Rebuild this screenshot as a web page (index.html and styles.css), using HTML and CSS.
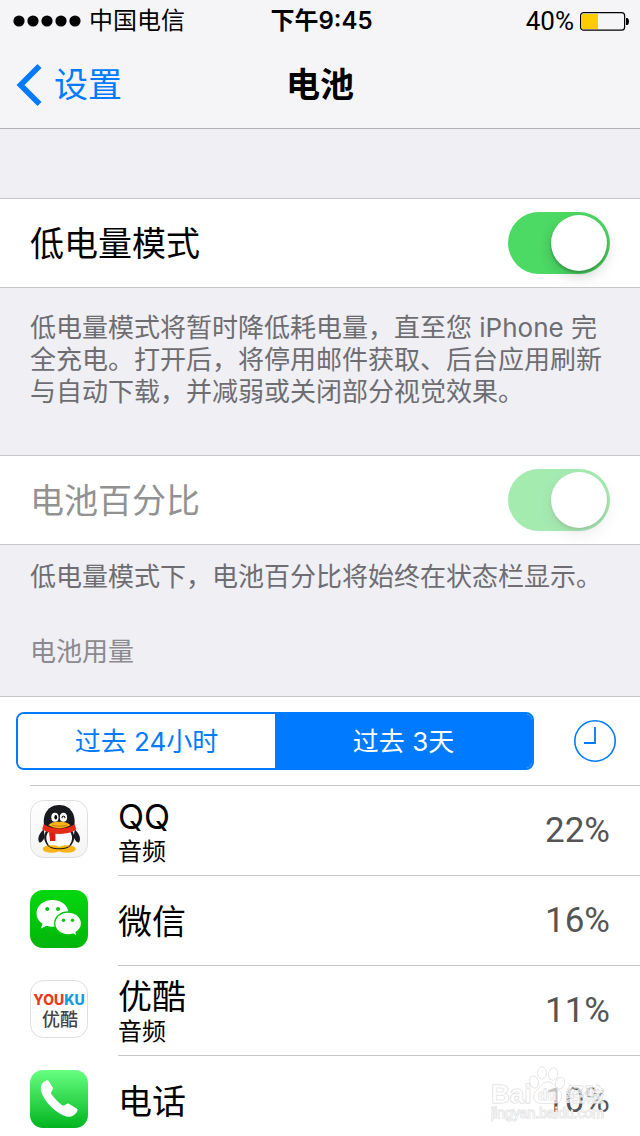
FILE: index.html
```html
<!DOCTYPE html>
<html lang="zh-CN">
<head>
<meta charset="utf-8">
<meta name="viewport" content="width=device-width">
<title>电池</title>
<link rel="stylesheet" href="styles.css">
</head>
<body>
<header class="top">
  <div class="status">
    <div class="carrier">
      <svg class="signal" width="68" height="12" viewBox="0 0 68 12" aria-hidden="true"><circle cx="6" cy="6" r="5.6"/><circle cx="20" cy="6" r="5.6"/><circle cx="34" cy="6" r="5.6"/><circle cx="48" cy="6" r="5.6"/><circle cx="62" cy="6" r="5.6"/></svg>
      <span>中国电信</span>
    </div>
    <div class="time">下午9:45</div>
    <div class="charge">
      <span class="level">40%</span>
      <svg width="50" height="20" viewBox="0 0 50 20" aria-hidden="true"><rect x=".6" y="1.6" width="44" height="17.6" rx="3" fill="none" stroke="#000" stroke-width="1.2"/><rect x="2" y="3" width="16" height="15" fill="#fc0"/><path d="M46 7h1.5q1.500 1 1.500 3.500t-1.500 3.500H46z"/></svg>
    </div>
  </div>
  <nav class="nav">
    <a class="back" href="#settings">
      <svg width="26" height="42" viewBox="0 0 26 42" aria-hidden="true"><path d="M23.500 2 4.500 21l19 19" fill="none" stroke="#007aff" stroke-width="5.600"/></svg>
      <span>设置</span>
    </a>
    <h1 class="title">电池</h1>
  </nav>
</header>
<main>
  <section class="group first">
    <div class="cell">
      <label for="low-power">低电量模式</label>
      <input class="switch" type="checkbox" id="low-power" checked>
    </div>
    <p class="note tall">低电量模式将暂时降低耗电量，直至您 iPhone 完全充电。打开后，将停用邮件获取、后台应用刷新与自动下载，并减弱或关闭部分视觉效果。</p>
  </section>
  <section class="group">
    <div class="cell off">
      <label for="percent">电池百分比</label>
      <input class="switch" type="checkbox" id="percent" checked disabled>
    </div>
    <p class="note">低电量模式下，电池百分比将始终在状态栏显示。</p>
  </section>
  <section class="usage">
    <h2 class="heading">电池用量</h2>
    <div class="panel">
      <div class="range">
        <div class="segments">
          <button class="segment" type="button">过去 24小时</button>
          <button class="segment active" type="button">过去 3天</button>
        </div>
        <button class="clock" type="button" aria-label="显示时间">
          <svg width="42" height="42" viewBox="0 0 42 42" fill="none" stroke="#007aff" aria-hidden="true"><circle cx="21" cy="21" r="20.200" stroke-width="1.600"/><path d="M21 7v16H10" stroke-width="1.800"/></svg>
        </button>
      </div>
      <ul class="apps">
        <li class="app">
          <svg class="icon" viewBox="0 0 58 58" aria-hidden="true">
            <defs><linearGradient id="paper" x2="0" y2="1"><stop stop-color="#fff"/><stop offset="1" stop-color="#f4f4f5"/></linearGradient></defs>
            <rect x=".5" y=".5" width="57" height="57" rx="13" fill="url(#paper)" stroke="#dedede"/>
            <g transform="translate(-1.300 0) scale(1.070 1.010)">
            <path d="M14 29C9 34 8 39 10 42c2 1 4-3 5-5zM43 29c5 5 6 10 4 13-2 1-4-3-5-5z" fill="#191a1f"/>
            <ellipse cx="28.500" cy="37" rx="14" ry="13" fill="#191a1f"/>
            <ellipse cx="28.500" cy="37.500" rx="12" ry="11.500" fill="#fff"/>
            <ellipse cx="21.500" cy="48.500" rx="8.500" ry="3.700" fill="#fbb315"/><ellipse cx="35.500" cy="48.500" rx="8.500" ry="3.700" fill="#fbb315"/>
            <path d="M17 44c3 6.500 20 6.500 23 0-4 5-19 5-23 0z" fill="#191a1f"/>
            <path d="M15 28c-3-10 1-23 13.500-23S45 18 42 28c-7 7-20 7-27 0z" fill="#191a1f"/>
            <path d="M14 24c8 5.500 22 5.500 29 0l1.500 5c-7 6-24 6-32 0z" fill="#e52b16"/><path d="M19 32l6 1v7.500h-5z" fill="#d9200f"/>
            <ellipse cx="24.500" cy="17" rx="3.400" ry="4.500" fill="#fff"/><ellipse cx="32.500" cy="17" rx="3.400" ry="4.500" fill="#fff"/>
            <ellipse cx="25.300" cy="17" rx="1.300" ry="2.200"/><path d="M31 18c.5-3 2.500-3 3 0" fill="none" stroke="#111"/>
            <path d="M18.500 25c3-3.500 7-3.500 10-3.500s7 0 10.500 3.500c-7 4-14 4-20.500 0z" fill="#fbb315"/><path d="M22 25c5 1.300 9 1.300 13.500 0" fill="none" stroke="#b86a0c" stroke-width=".8"/>
            </g>
          </svg>
          <div class="entry"><div class="names"><span class="name">QQ</span><span class="detail">音频</span></div><span class="share">22%</span></div>
        </li>
        <li class="app">
          <svg class="icon" viewBox="0 0 58 58" aria-hidden="true">
            <defs><linearGradient id="leaf" x2="0" y2="1"><stop stop-color="#03d80e"/><stop offset="1" stop-color="#02b40b"/></linearGradient></defs>
            <rect width="58" height="58" rx="13" fill="url(#leaf)"/>
            <path d="M22.500 10C13.500 10 6.500 15.800 6.500 23.300c0 4.400 2.300 8 6 10.400L11 38.500l5.500-2.700c2 .6 4 .9 6 .9 9 0 16-6 16-13.400S31.500 10 22.500 10z" fill="#fff"/>
            <path d="M38.200 22c-7.500 0-13.500 5-13.500 11.400s6 11.400 13.500 11.400c1.800 0 3.300-.3 4.800-.8l4.300 2.500-1.200-4.200c3.400-2.200 5.400-5.300 5.400-8.900 0-6.400-5.800-11.400-13.300-11.400z" fill="#fff" stroke="#03c60c" stroke-width="1.300"/>
            <g fill="#03c60c"><circle cx="17.200" cy="19" r="2"/><circle cx="28" cy="19" r="2"/><circle cx="33.500" cy="30.300" r="1.700"/><circle cx="42.500" cy="30.300" r="1.700"/></g>
          </svg>
          <div class="entry"><div class="names"><span class="name">微信</span></div><span class="share">16%</span></div>
        </li>
        <li class="app">
          <svg class="icon" viewBox="0 0 58 58" aria-hidden="true">
            <rect x=".5" y=".5" width="57" height="57" rx="13" fill="#fff" stroke="#dedede"/>
            <text class="brand" x="29" y="25" text-anchor="middle"><tspan fill="#e8391d">YOU</tspan><tspan fill="#139bdc">KU</tspan></text>
            <text class="brand-zh" x="30" y="46" text-anchor="middle">优酷</text>
          </svg>
          <div class="entry"><div class="names"><span class="name">优酷</span><span class="detail">音频</span></div><span class="share">11%</span></div>
        </li>
        <li class="app">
          <svg class="icon" viewBox="0 0 58 58" aria-hidden="true">
            <defs><linearGradient id="mint" x2="0" y2="1"><stop stop-color="#67ff81"/><stop offset="1" stop-color="#01b41f"/></linearGradient></defs>
            <rect width="58" height="58" rx="13" fill="url(#mint)"/>
            <path d="M11.500 14.500c1.500-2.500 4-4 5.500-4.300 1-.2 1.400.3 2 1.300l3.600 5.700c.7 1.200.3 2-.4 3.100l-1 1.700c-.5.900-.3 1.500.5 2.600 3 4.200 6.500 7.700 10.200 10.300 1 .7 1.800.8 2.700.3l2-1.200c1-.6 1.700-.7 2.700 0l7.200 4.600c1.200.8 1.400 1.500.9 2.500-1.400 2.800-4.300 5.600-8 5.700-6.500.2-14.500-6-19.500-11.300-5-5.400-8.700-11.500-9-16.500-.1-1.800.1-3.400.6-4.500z" fill="#fff"/>
          </svg>
          <div class="entry"><div class="names"><span class="name">电话</span></div><span class="share">10%</span></div>
        </li>
      </ul>
      <svg class="watermark" width="120" height="60" viewBox="0 0 120 60" aria-hidden="true">
        <g class="mark">
          <ellipse cx="43" cy="20" rx="4.200" ry="6" transform="rotate(-15 43 20)"/><ellipse cx="51" cy="11" rx="4.500" ry="6"/><ellipse cx="62" cy="12" rx="4.500" ry="6" transform="rotate(8 62 12)"/><ellipse cx="69" cy="21" rx="4.200" ry="6" transform="rotate(20 69 21)"/>
          <path d="M56 20c-5 0-6 5-10 8s-5 12 2 13c5 1 10 0 16 0 8 0 8-9 4-13s-6-8-12-8z"/>
          <text class="mark-main" x="0" y="41">Bai</text><text class="mark-du" x="47" y="38">du</text><text class="mark-zh" x="75" y="40">经验</text>
          <text class="mark-url" x="0" y="56">jingyan.baidu.com</text>
        </g>
      </svg>
    </div>
  </section>
</main>
</body>
</html>
```

FILE: styles.css
```css
* { box-sizing: border-box; }

body {
  margin: 0;
  background: #efeff4;
  color: #000;
  font-family: Inter, "Noto Sans CJK SC", sans-serif;
  font-size: 34px;
  line-height: 40px;
  text-spacing-trim: space-all;
}

h1, h2, p, ul { margin: 0; padding: 0; }
button { font: inherit; cursor: pointer; }

.top {
  background: #f5f5f7;
  border-bottom: 1px solid #b2b2b2;
}

.status {
  display: grid;
  grid-template-columns: 1fr auto 1fr;
  align-items: center;
  height: 42px;
  padding: 0 10px 0 13px;
  font-size: 24px;
}

.carrier, .charge {
  display: flex;
  align-items: center;
  gap: 8px;
}

.charge { justify-content: flex-end; gap: 6px; }
.level { font-family: Roboto, sans-serif; font-size: 26px; }
.time { font-weight: 600; }

.nav {
  display: grid;
  grid-template-columns: 1fr auto 1fr;
  align-items: center;
  height: 86px;
  padding: 0 16px;
}

.back {
  display: flex;
  align-items: center;
  gap: 12px;
  color: #007aff;
  text-decoration: none;
}

.title {
  font-size: 34px;
  font-weight: 600;
}

.first { padding-top: 69px; }

.cell {
  display: flex;
  align-items: center;
  justify-content: space-between;
  height: 90px;
  padding: 0 30px;
  background: #fff;
  border: solid #c8c7cc;
  border-width: 1px 0;
}

.cell label { padding-top: 2px; }
.off label { color: #929292; }

.switch {
  appearance: none;
  display: flex;
  justify-content: flex-end;
  width: 102px;
  height: 62px;
  margin: 0;
  padding: 3px;
  border-radius: 31px;
  background: #4cd964;
}

.switch::before {
  content: "";
  width: 56px;
  height: 56px;
  border-radius: 50%;
  background: #fff;
  box-shadow: 0 6px 14px rgba(0, 0, 0, .16), 0 2px 3px rgba(0, 0, 0, .25);
}

.switch:not(:checked) {
  justify-content: flex-start;
  background: #e5e5ea;
}

.switch:disabled { opacity: .5; }

.note {
  padding: 16px 30px 32px;
  color: #6d6d72;
  font-size: 26px;
  line-height: 32px;
}

.tall { padding: 24px 30px 47px; }

.heading {
  padding: 11px 30px 28px;
  color: #8a8a8f;
  font-size: 26px;
  font-weight: 400;
  line-height: 32px;
}

.panel {
  position: relative;
  background: #fff;
  border-top: 1px solid #c8c7cc;
}

.range {
  display: flex;
  align-items: center;
  justify-content: space-between;
  padding: 15px 24px 15px 16px;
}

.segments {
  display: flex;
  flex: 1;
  margin-right: 40px;
  overflow: hidden;
  border: 2px solid #007aff;
  border-radius: 8px;
}

.segment {
  flex: 1;
  height: 54px;
  padding: 2px 0 0;
  border: 0;
  background: #fff;
  color: #007aff;
  font-size: 26px;
}

.active { background: #007aff; color: #fff; }

.clock {
  display: flex;
  padding: 0;
  border: 0;
  background: none;
}

.apps {
  margin-left: 30px;
  border-top: 1px solid #c8c7cc;
  list-style: none;
}

.app {
  display: flex;
  gap: 30px;
  height: 90px;
}

.app:last-child { height: 80px; }

.icon {
  flex: none;
  width: 58px;
  height: 58px;
  margin-top: 14px;
}

.entry {
  display: flex;
  flex: 1;
  align-items: center;
  justify-content: space-between;
  height: 90px;
  padding-right: 30px;
  border-bottom: 1px solid #c8c7cc;
}

.app:last-child .entry { border-bottom-color: transparent; }

.names {
  display: flex;
  flex-direction: column;
  padding-top: 2px;
}

.detail {
  font-size: 24px;
  line-height: 30px;
}

.share {
  color: #555;
  font-family: Roboto, sans-serif;
  font-size: 35px;
}

.brand { font: 800 14px Inter, sans-serif; }
.brand-zh { font: 500 18px "Noto Sans CJK SC", sans-serif; fill: #444; }

.watermark {
  position: absolute;
  right: 29px;
  bottom: 14px;
}

.mark {
  fill: #fff;
  fill-opacity: .65;
  stroke: #dcdcdc;
  stroke-width: 1px;
  paint-order: stroke;
}

.mark-main { font: 700 26px "Liberation Sans", sans-serif; }
.mark-du { font: 700 15px "Liberation Sans", sans-serif; }
.mark-zh { font: 700 19px "Noto Sans CJK SC", sans-serif; }
.mark-url { font: 400 14px "Liberation Sans", sans-serif; }
```
